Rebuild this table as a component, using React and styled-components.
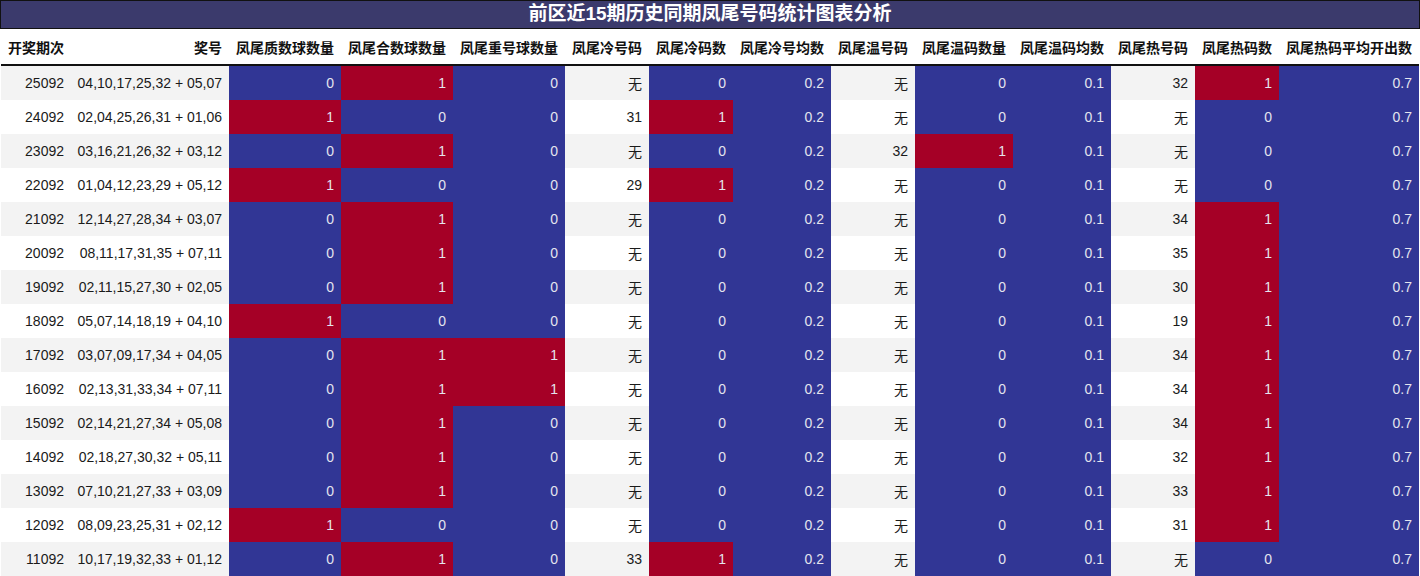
import React from 'react';
import styled, { createGlobalStyle } from 'styled-components';

const GlobalStyle = createGlobalStyle`
  body {
    margin: 0;
    background: #fff;
    font-family: 'Liberation Sans', 'Noto Sans CJK SC', sans-serif;
  }
`;

const columns = [
  { title: '开奖期次', width: 70 },
  { title: '奖号', width: 158 },
  { title: '凤尾质数球数量', width: 112 },
  { title: '凤尾合数球数量', width: 112 },
  { title: '凤尾重号球数量', width: 112 },
  { title: '凤尾冷号码', width: 84 },
  { title: '凤尾冷码数', width: 84 },
  { title: '凤尾冷号均数', width: 98 },
  { title: '凤尾温号码', width: 84 },
  { title: '凤尾温码数量', width: 98 },
  { title: '凤尾温码均数', width: 98 },
  { title: '凤尾热号码', width: 84 },
  { title: '凤尾热码数', width: 84 },
  { title: '凤尾热码平均开出数', width: 140 },
];

const template = columns.map((c) => `${c.width}px`).join(' ');

// [期次, 奖号, 质, 合, 重, 冷号, 冷数, 温号, 温数, 热号, 热数]
const rows = [
  ['25092', '04,10,17,25,32 + 05,07', 0, 1, 0, '无', 0, '无', 0, '32', 1],
  ['24092', '02,04,25,26,31 + 01,06', 1, 0, 0, '31', 1, '无', 0, '无', 0],
  ['23092', '03,16,21,26,32 + 03,12', 0, 1, 0, '无', 0, '32', 1, '无', 0],
  ['22092', '01,04,12,23,29 + 05,12', 1, 0, 0, '29', 1, '无', 0, '无', 0],
  ['21092', '12,14,27,28,34 + 03,07', 0, 1, 0, '无', 0, '无', 0, '34', 1],
  ['20092', '08,11,17,31,35 + 07,11', 0, 1, 0, '无', 0, '无', 0, '35', 1],
  ['19092', '02,11,15,27,30 + 02,05', 0, 1, 0, '无', 0, '无', 0, '30', 1],
  ['18092', '05,07,14,18,19 + 04,10', 1, 0, 0, '无', 0, '无', 0, '19', 1],
  ['17092', '03,07,09,17,34 + 04,05', 0, 1, 1, '无', 0, '无', 0, '34', 1],
  ['16092', '02,13,31,33,34 + 07,11', 0, 1, 1, '无', 0, '无', 0, '34', 1],
  ['15092', '02,14,21,27,34 + 05,08', 0, 1, 0, '无', 0, '无', 0, '34', 1],
  ['14092', '02,18,27,30,32 + 05,11', 0, 1, 0, '无', 0, '无', 0, '32', 1],
  ['13092', '07,10,21,27,33 + 03,09', 0, 1, 0, '无', 0, '无', 0, '33', 1],
  ['12092', '08,09,23,25,31 + 02,12', 1, 0, 0, '无', 0, '无', 0, '31', 1],
  ['11092', '10,17,19,32,33 + 01,12', 0, 1, 0, '33', 1, '无', 0, '无', 0],
];

export default function App() {
  return (
    <Wrapper>
      <GlobalStyle />
      <Title>前区近15期历史同期凤尾号码统计图表分析</Title>
      <HeaderRow>
        {columns.map((c) => (
          <HeadCell key={c.title}>{c.title}</HeadCell>
        ))}
      </HeaderRow>
      {rows.map((r, i) => {
        const [issue, balls, prime, comp, repeat, cold, coldN, warm, warmN, hot, hotN] = r;
        const striped = i % 2 === 0;
        const count = (v) => (v ? 'hot' : 'cold');
        return (
          <Row key={issue}>
            <Cell $striped={striped}>{issue}</Cell>
            <Cell $striped={striped}>{balls}</Cell>
            <Cell $tone={count(prime)}>{prime}</Cell>
            <Cell $tone={count(comp)}>{comp}</Cell>
            <Cell $tone={count(repeat)}>{repeat}</Cell>
            <Cell $striped={striped}>{cold}</Cell>
            <Cell $tone={count(coldN)}>{coldN}</Cell>
            <Cell $tone="cold">0.2</Cell>
            <Cell $striped={striped}>{warm}</Cell>
            <Cell $tone={count(warmN)}>{warmN}</Cell>
            <Cell $tone="cold">0.1</Cell>
            <Cell $striped={striped}>{hot}</Cell>
            <Cell $tone={count(hotN)}>{hotN}</Cell>
            <Cell $tone="cold">0.7</Cell>
          </Row>
        );
      })}
    </Wrapper>
  );
}

const Wrapper = styled.div`
  width: 1420px;
  background: #fff;
`;

const Title = styled.div`
  box-sizing: border-box;
  width: 1420px;
  height: 29px;
  border: 1px solid #111;
  background: #3b3a6c;
  color: #fff;
  font-size: 19px;
  font-weight: bold;
  line-height: 26px;
  text-align: center;
`;

const HeaderRow = styled.div`
  box-sizing: border-box;
  display: grid;
  grid-template-columns: ${template};
  height: 37px;
  margin-left: 1px;
  width: 1418px;
  border-bottom: 2px solid #111;
`;

const HeadCell = styled.div`
  display: flex;
  align-items: center;
  justify-content: flex-end;
  padding: 0 7px 0 0;
  font-size: 14px;
  font-weight: bold;
  color: #111;
  white-space: nowrap;
`;

const Row = styled.div`
  display: grid;
  grid-template-columns: ${template};
  height: 34px;
  margin-left: 1px;
  width: 1418px;
`;

const tones = {
  hot: '#a50026',
  cold: '#313695',
};

const Cell = styled.div`
  display: flex;
  align-items: center;
  justify-content: flex-end;
  padding: 0 7px 0 0;
  font-size: 14px;
  white-space: nowrap;
  background: ${(p) => (p.$tone ? tones[p.$tone] : p.$striped ? '#f3f3f3' : '#fff')};
  color: ${(p) => (p.$tone ? '#e4e4ee' : '#1a1a1a')};
`;
